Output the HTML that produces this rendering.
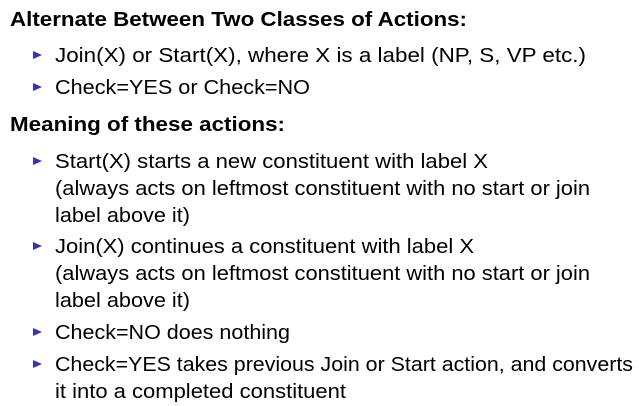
<!DOCTYPE html>
<html><head><meta charset="utf-8"><style>
html,body{margin:0;padding:0;background:#fff;width:639px;height:406px;overflow:hidden}
svg{display:block}
text{font-family:"Liberation Sans",sans-serif;font-size:20.5px;fill:#000}
.b{font-weight:bold}
</style></head><body>
<svg width="639" height="406" viewBox="0 0 639 406" xmlns="http://www.w3.org/2000/svg">
<defs><g id="tri"><polygon points="0,0 9,4 0,8" fill="#3434b4"/></g></defs>
<text class="b" x="10" y="26" textLength="457" lengthAdjust="spacingAndGlyphs">Alternate Between Two Classes of Actions:</text>
<use href="#tri" x="33" y="51"/>
<text x="55" y="62" textLength="531" lengthAdjust="spacingAndGlyphs">Join(X) or Start(X), where X is a label (NP, S, VP etc.)</text>
<use href="#tri" x="33" y="83"/>
<text x="55" y="94" textLength="255" lengthAdjust="spacingAndGlyphs">Check=YES or Check=NO</text>
<text class="b" x="10" y="131" textLength="275" lengthAdjust="spacingAndGlyphs">Meaning of these actions:</text>
<use href="#tri" x="33" y="157"/>
<text x="55" y="168" textLength="433" lengthAdjust="spacingAndGlyphs">Start(X) starts a new constituent with label X</text>
<text x="55" y="195" textLength="535" lengthAdjust="spacingAndGlyphs">(always acts on leftmost constituent with no start or join</text>
<text x="55" y="222" textLength="135" lengthAdjust="spacingAndGlyphs">label above it)</text>
<use href="#tri" x="33" y="242"/>
<text x="55" y="253" textLength="419" lengthAdjust="spacingAndGlyphs">Join(X) continues a constituent with label X</text>
<text x="55" y="280" textLength="535" lengthAdjust="spacingAndGlyphs">(always acts on leftmost constituent with no start or join</text>
<text x="55" y="307" textLength="135" lengthAdjust="spacingAndGlyphs">label above it)</text>
<use href="#tri" x="33" y="328"/>
<text x="55" y="339" textLength="235" lengthAdjust="spacingAndGlyphs">Check=NO does nothing</text>
<use href="#tri" x="33" y="360"/>
<text x="55" y="371" textLength="578" lengthAdjust="spacingAndGlyphs">Check=YES takes previous Join or Start action, and converts</text>
<text x="55" y="398" textLength="291" lengthAdjust="spacingAndGlyphs">it into a completed constituent</text>
</svg>
</body></html>
